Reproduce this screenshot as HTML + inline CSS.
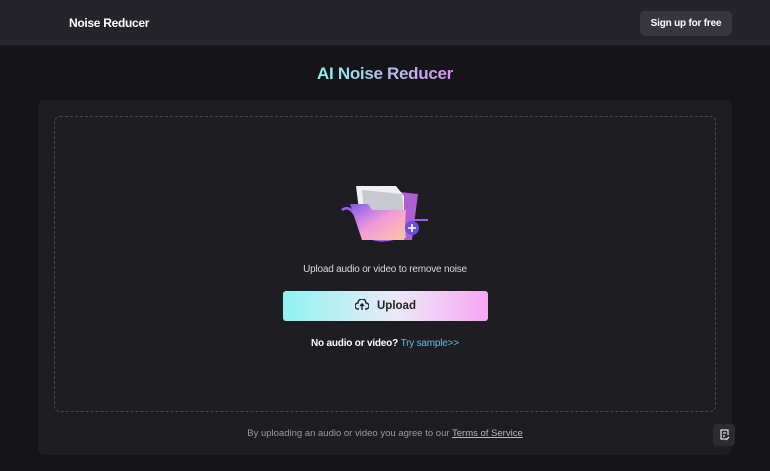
<!DOCTYPE html>
<html><head><style>
*{margin:0;padding:0;box-sizing:border-box}
body{width:770px;height:471px;background:#151419;font-family:"Liberation Sans",sans-serif;position:relative;overflow:hidden;color:#fff}
.hdr{position:absolute;left:0;top:0;width:770px;height:46px;background:#25242a;border-bottom:1px solid #1a191e}
.logo{position:absolute;left:69px;top:16px;font-size:12px;font-weight:bold;letter-spacing:-0.3px}
.sign{position:absolute;left:640px;top:11px;width:92px;height:25px;background:#37363e;border-radius:5px;font-size:10px;font-weight:bold;text-align:center;line-height:25px;letter-spacing:-0.2px}
h1{position:absolute;left:0;width:770px;top:64px;text-align:center;font-size:17px;font-weight:bold;letter-spacing:-0.3px;background:linear-gradient(90deg,#8ef0e8 42%,#e287f0 60%);-webkit-background-clip:text;color:transparent}
.card{position:absolute;left:38px;top:100px;width:694px;height:355px;background:#1e1d22;border-radius:7px}
.drop{position:absolute;left:54px;top:116px;width:662px;height:296px;border:1px dashed #4a4950;border-radius:6px}
.t1{position:absolute;left:0;width:770px;top:264px;text-align:center;font-size:10px;color:#d8d8dc;letter-spacing:-0.2px}
.btn{position:absolute;left:283px;top:291px;width:205px;height:30px;border-radius:3px;background:linear-gradient(90deg,#8ff2f2,#eaeaf7 55%,#f7a6f3);color:#222;font-weight:bold;font-size:11.5px;text-align:center;line-height:30px}
.t2{position:absolute;left:0;width:770px;top:338px;text-align:center;font-size:10px;font-weight:bold;letter-spacing:-0.2px}
.t2 span{color:#67b9f0;font-weight:normal}
.t3{position:absolute;left:0;width:770px;top:428px;text-align:center;font-size:9.5px;color:#9a9aa0}
.t3 u{color:#b8b8be}
.fb{position:absolute;left:713px;top:424px;width:22px;height:22px;background:#2c2b31;border-radius:4px}
</style></head><body>
<div class="hdr"><div class="logo">Noise Reducer</div><div class="sign">Sign up for free</div></div>
<h1>AI Noise Reducer</h1>
<div class="card"></div>
<div class="drop"></div>
<svg style="position:absolute;left:338px;top:182px" width="92" height="64" viewBox="0 0 92 64">
<path d="M90 38 L60 38" stroke="#9b5de5" stroke-width="2" fill="none"/>
<path d="M4 28 C14 20 20 40 24 48 C30 60 50 62 66 52" stroke="#a45cf0" stroke-width="2.5" fill="none"/>
<path d="M62 10 L80 12 L74 58 L62 58Z" fill="#b05fd0"/>
<path d="M18 4 L58 4 L66 14 L66 52 L24 52Z" fill="#f0f0f4"/>
<path d="M24 8 L64 12 L68 56 L28 54Z" fill="#c8c8d0"/>
<defs><linearGradient id="g" x1="0" y1="0" x2="1" y2="1"><stop offset="0" stop-color="#7b5cf0"/><stop offset=".5" stop-color="#f49ad8"/><stop offset="1" stop-color="#fbc6a0"/></linearGradient></defs>
<path d="M12 22 L30 22 L34 28 L68 28 L66 58 L24 58Z" fill="url(#g)"/>
<circle cx="74" cy="46" r="7" fill="#6a4fe0"/>
<path d="M74 42v8M70 46h8" stroke="#fff" stroke-width="1.6"/>
</svg>
<div class="t1">Upload audio or video to remove noise</div>
<div class="btn"><svg width="14" height="12" viewBox="0 0 14 12" style="vertical-align:-2px;margin-right:8px"><path d="M4 10H3a3 3 0 0 1 0-6 4 4 0 0 1 8 0 3 3 0 0 1 0 6h-1M7 11V5M5 7l2-2 2 2" stroke="#222" stroke-width="1.4" fill="none"/></svg>Upload</div>
<div class="t2">No audio or video? <span>Try sample&gt;&gt;</span></div>
<div class="t3">By uploading an audio or video you agree to our <u>Terms of Service</u></div>
<div class="fb"><svg width="22" height="22" viewBox="0 0 22 22"><path d="M14 15H8V6h7v5M10 9h3M10 12h2M13 16l3-3" stroke="#ddd" stroke-width="1.3" fill="none"/></svg></div>
</body></html>
